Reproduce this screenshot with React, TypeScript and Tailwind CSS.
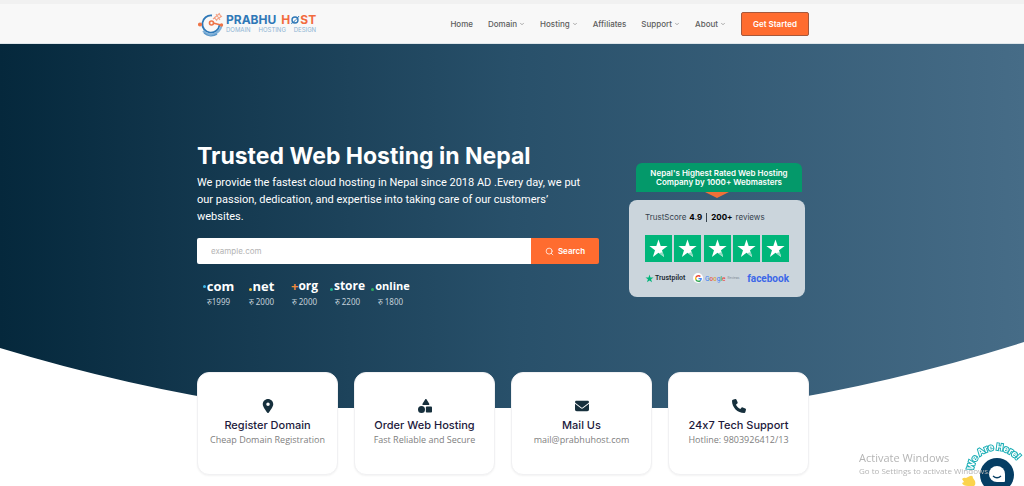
import type { ReactNode } from 'react'
import { FaEnvelope, FaLocationDot, FaPhone, FaShapes } from 'react-icons/fa6'
import { FiChevronDown, FiSearch } from 'react-icons/fi'

interface NavItem {
    label: string;
    hasMenu?: boolean;
}

interface Tld {
    name: string;
    mark: ReactNode;
    nameClass: string;
    price: string;
}

interface Feature {
    icon: ReactNode;
    title: string;
    text: string;
}

const navItems: NavItem[] = [
    { label: 'Home' },
    { label: 'Domain', hasMenu: true },
    { label: 'Hosting', hasMenu: true },
    { label: 'Affiliates' },
    { label: 'Support', hasMenu: true },
    { label: 'About', hasMenu: true },
]

const Dot = ({ className }: { className: string }) => (
    <span className={`mr-px size-[3px] rounded-full ${className}`} />
)

const tlds: Tld[] = [
    { name: 'com', mark: <Dot className="bg-[#3fb8e8]" />, nameClass: 'text-[13px]', price: 'रु1999' },
    { name: 'net', mark: <Dot className="mb-[3px] self-end bg-[#f5c842]" />, nameClass: 'text-[13px]', price: 'रु 2000' },
    { name: 'org', mark: <span className="text-[13px] text-[#f08a3c]">+</span>, nameClass: 'text-[12px]', price: 'रु 2000' },
    { name: 'store', mark: <Dot className="mb-[3px] self-end bg-[#1fb58f]" />, nameClass: 'text-[12px]', price: 'रु 2200' },
    { name: 'online', mark: <Dot className="mb-[3px] self-end bg-[#2fae5f]" />, nameClass: 'text-[11px]', price: 'रु 1800' },
]

const features: Feature[] = [
    { icon: <FaLocationDot />, title: 'Register Domain', text: 'Cheap Domain Registration' },
    { icon: <FaShapes />, title: 'Order Web Hosting', text: 'Fast Reliable and Secure' },
    { icon: <FaEnvelope />, title: 'Mail Us', text: 'mail@prabhuhost.com' },
    { icon: <FaPhone />, title: '24x7 Tech Support', text: 'Hotline: 9803926412/13' },
]

const Container = ({ className = '', children }: { className?: string; children: ReactNode }) => (
    <div className="px-4 lg:pl-0 lg:pr-[18px]">
        <div className={`mx-auto max-w-[612px] ${className}`}>{children}</div>
    </div>
)

const Logo = () => (
    <a href="#" className="flex items-center gap-0.5" aria-label="Prabhu Host">
        <svg viewBox="0 0 27 26" className="h-[26px] w-[27px]" fill="none">
            <path d="M15 4.500a8.600 8.600 0 1 0 7.500 9.500" stroke="#2f78b7" strokeWidth="1.800" />
            <path d="M6 20a11 11 0 0 0 18.500-5" stroke="#7fb0d8" strokeWidth="2" />
            <path d="M7 22a11 11 0 0 0 13 1" stroke="#5b97c9" strokeWidth="1.500" />
            <path d="M1 13.500h4M16 12l8 2" stroke="#ee7447" strokeWidth="1.600" />
            <circle cx="3" cy="13.500" r="2" fill="#ee7447" />
            <circle cx="14.500" cy="12" r="2" stroke="#ee7447" strokeWidth="1.600" />
            <circle cx="24.500" cy="14" r="1.700" fill="#ee7447" />
            <path d="M17 6l3 4M19 3l4 6M22 2l2 4M16 8l6-5M19 9l6-4" stroke="#f3a387" strokeWidth="1.100" />
        </svg>
        <div>
            <div className="flex gap-[5px] text-[12px] leading-[12px] font-bold">
                <span className="text-[#2f78b7]">PRABHU</span>
                <span className="flex items-center text-[#f26b3f]">
                    H
                    <svg viewBox="0 0 10 10" className="size-[10px]" fill="none">
                        <circle cx="5" cy="5" r="3" stroke="#2f78b7" strokeWidth="1.400" />
                        <path d="M1 8.500C3 8 7 4 9 1" stroke="#2f78b7" />
                    </svg>
                    ST
                </span>
            </div>
            <div className="flex justify-between text-[6px] leading-[7px] text-[#8db4d4]">
                <span>DOMAIN</span>
                <span>HOSTING</span>
                <span>DESIGN</span>
            </div>
        </div>
    </a>
)

const Header = () => (
    <header className="border-t-4 border-b border-t-[#f1f1f1] border-b-[#dfe6ea] bg-[#f8f8f8]">
        <Container className="flex h-[39px] items-center justify-between">
            <Logo />
            <nav className="flex items-center gap-[15px] text-[8px] font-medium text-[#5d5d5d]">
                {navItems.map((item) => (
                    <a key={item.label} href="#" className="flex items-center gap-0.5">
                        {item.label}
                        {item.hasMenu && <FiChevronDown className="size-[6px]" />}
                    </a>
                ))}
                <button className="h-6 w-[68px] rounded-xs border border-[#a5583c] bg-[#ff6c2f] font-semibold text-white">
                    Get Started
                </button>
            </nav>
        </Container>
    </header>
)

const DomainSearch = () => (
    <form className="mt-[13px] flex h-[26px] overflow-hidden rounded-xs" onSubmit={(e) => e.preventDefault()}>
        <input
            type="text"
            aria-label="Domain name"
            placeholder="example.com"
            className="min-w-0 flex-1 bg-white px-[14px] text-[8px] text-gray-700 outline-none placeholder:text-[#b4b4b4]"
        />
        <button className="flex w-[68px] items-center justify-center gap-1 bg-[#ff6c2f] text-[8px] font-semibold text-white">
            <FiSearch className="size-[9px]" />
            Search
        </button>
    </form>
)

const TldList = () => (
    <ul className="mt-[14px] flex">
        {tlds.map((tld) => (
            <li key={tld.name} className="w-[43px] text-center">
                <div className="flex h-4 items-center justify-center font-['Open_Sans',sans-serif] leading-4 font-bold text-white">
                    {tld.mark}
                    <span className={tld.nameClass}>{tld.name}</span>
                </div>
                <div className="mt-0.5 font-['Noto_Sans',sans-serif] text-[8px] leading-[12px] whitespace-nowrap text-[#c3d0d9]">
                    {tld.price}
                </div>
            </li>
        ))}
    </ul>
)

const Star = ({ className }: { className?: string }) => (
    <svg viewBox="0 0 24 24" className={className} fill="currentColor">
        <path d="M12 1.500l2.600 7.700h8.200l-6.600 4.800 2.500 7.800L12 17l-6.700 4.800L7.800 14 1.200 9.200h8.200z" />
    </svg>
)

const RatingStar = () => (
    <svg viewBox="0 0 27 27" className="size-[27px]">
        <rect width="27" height="27" fill="#00b67a" />
        <path d="M13.500 4.500l2.200 6.600h6.900L17 15.200l2.100 6.700-5.600-4.100-5.600 4.100L10 15.200l-5.600-4.100h6.900z" fill="#fff" />
        <path d="M14 18.300l3.900-1.300 1.200 4.900z" fill="#8fdcc2" />
    </svg>
)

const GoogleMark = () => (
    <svg viewBox="0 0 48 48" className="size-[7px]">
        <path fill="#ea4335" d="M24 9.500c3.500 0 6.700 1.200 9.200 3.600l6.900-6.900C35.900 2.400 30.500 0 24 0 14.600 0 6.500 5.400 2.600 13.200l8 6.200C12.400 13.700 17.700 9.500 24 9.500z" />
        <path fill="#4285f4" d="M47 24.600c0-1.600-.2-3.100-.4-4.600H24v9h12.900c-.6 3-2.300 5.500-4.800 7.200l7.700 6C44.400 38 47 31.800 47 24.600z" />
        <path fill="#fbbc05" d="M10.500 28.600a14.500 14.500 0 0 1 0-9.200l-8-6.200a24 24 0 0 0 0 21.600z" />
        <path fill="#34a853" d="M24 48c6.500 0 11.900-2.100 15.900-5.800l-7.700-6c-2.200 1.500-4.900 2.300-8.200 2.300-6.300 0-11.600-4.200-13.500-9.900l-8 6.200C6.500 42.600 14.600 48 24 48z" />
    </svg>
)

const TrustBadge = () => (
    <aside className="mt-[23px] mr-1 w-44 shrink-0">
        <div className="mr-[3px] ml-[7px] flex h-[29px] flex-col items-center justify-center rounded-t-md bg-[#04996a] text-center text-[8px] leading-[9px] font-semibold text-white">
            <span>Nepal's Highest Rated Web Hosting</span>
            <span>Company by 1000+ Webmasters</span>
        </div>
        <svg viewBox="0 0 24 6" className="mx-auto mb-0.5 h-[6px] w-6">
            <path d="M0 0h24l-12 6z" fill="#ef7038" />
        </svg>
        <div className="rounded-lg bg-[#cbd5dc] px-4 pt-[10px] pb-3">
            <p className="flex items-center text-[8px] leading-[14px] text-[#35424c]">
                TrustScore <b className="ml-[3px] text-black">4.9</b>
                <span className="mx-1 h-[9px] w-px bg-[#35424c]" />
                <b className="mr-[3px] text-black">200+</b> reviews
            </p>
            <div className="mt-[11px] flex justify-between">
                {[1, 2, 3, 4, 5].map((n) => (
                    <RatingStar key={n} />
                ))}
            </div>
            <div className="mt-[9px] flex h-[14px] items-center justify-between">
                <span className="flex items-center gap-px font-['Roboto',sans-serif] text-[7px] font-semibold text-[#1c2a33]">
                    <Star className="size-[9px] text-[#00b67a]" />
                    Trustpilot
                </span>
                <span className="flex items-center gap-0.5 text-[6px] font-medium">
                    <span className="flex size-[10px] items-center justify-center rounded-full bg-white">
                        <GoogleMark />
                    </span>
                    <span>
                        <span className="text-[#4285f4]">G</span>
                        <span className="text-[#ea4335]">o</span>
                        <span className="text-[#d99a10]">o</span>
                        <span className="text-[#4285f4]">g</span>
                        <span className="text-[#34a853]">l</span>
                        <span className="text-[#ea4335]">e</span>
                    </span>
                    <span className="text-[3px] text-[#8a949c]">Reviews</span>
                </span>
                <span className="font-['Roboto',sans-serif] text-[10px] font-bold text-[#3b67e8]">facebook</span>
            </div>
        </div>
    </aside>
)

const Hero = () => (
    <section className="bg-linear-to-r from-[#05283c] via-[#28506a] to-[#466c87]">
        <Container className="flex justify-between gap-[30px] pt-24 pb-8">
            <div className="max-w-[402px] flex-1">
                <h1 className="text-[23px] leading-8 font-bold text-white">Trusted Web Hosting in Nepal</h1>
                <p className="mt-0.5 font-['Roboto',sans-serif] text-[11px] leading-[17px] text-white">
                    We provide the fastest cloud hosting in Nepal since 2018 AD .Every day, we put
                    <br className="hidden sm:block" /> our passion, dedication, and expertise into taking care
                    of our customers’
                    <br className="hidden sm:block" /> websites.
                </p>
                <DomainSearch />
                <TldList />
            </div>
            <TrustBadge />
        </Container>
        <svg viewBox="0 0 1024 68" preserveAspectRatio="none" className="block h-[68px] w-full">
            <path d="M0 8Q512 163 1024 2V170H0z" fill="#fff" />
        </svg>
    </section>
)

const Features = () => (
    <section className="relative -mt-9 pb-3">
        <Container className="grid grid-cols-2 gap-4 sm:grid-cols-4">
            {features.map((feature) => (
                <article
                    key={feature.title}
                    className="flex flex-col items-center rounded-xl border border-[#f1f1f3] bg-white pt-[26px] pb-[28px] text-center shadow-xs"
                >
                    <span className="text-[14px] text-[#17303d]">{feature.icon}</span>
                    <h2 className="mt-1 text-[11px] leading-4 font-medium text-[#1d1a3c] [font-feature-settings:'calt'_0]">
                        {feature.title}
                    </h2>
                    <p className="font-['Open_Sans',sans-serif] text-[9px] leading-[13px] whitespace-nowrap text-[#808080]">
                        {feature.text}
                    </p>
                </article>
            ))}
        </Container>
    </section>
)

const ChatButton = () => (
    <button className="fixed right-0 bottom-0" aria-label="Open chat">
        <svg viewBox="0 0 64 50" className="h-[50px] w-16">
            <path id="greeting" d="M13 35C16 12 44 6 59 27" fill="none" />
            <text
                className="font-['Inter',sans-serif] text-[9px] font-bold"
                fill="#fff"
                stroke="#18adb5"
                strokeWidth="2"
                paintOrder="stroke"
            >
                <textPath href="#greeting">We Are Here!</textPath>
            </text>
            <path d="M2 43q2-2 4-1l4-2q3-1 3 2l2 3q1 4-1 5H8q-5 0-6-3l2-1z" fill="#fbd34d" />
            <circle cx="37" cy="39" r="17" fill="#053d63" />
            <path d="M37 30a8 8 0 0 1 8 8v7q0 1-1 1h-7a8 8 0 0 1 0-16z" fill="#fff" />
            <path d="M33 40q4 3.500 8 0" stroke="#053d63" strokeWidth="1.300" fill="none" />
        </svg>
    </button>
)

const App = () => (
    <main className="bg-white font-['Inter',sans-serif]">
        <Header />
        <Hero />
        <Features />
        <ChatButton />
        <div className="pointer-events-none fixed right-[35px] bottom-[10px] w-[130px] font-['Open_Sans',sans-serif] whitespace-nowrap text-[#b5b5b5]">
            <p className="text-[11px] leading-[14px]">Activate Windows</p>
            <p className="text-[8px] leading-[11px]">Go to Settings to activate Windows.</p>
        </div>
    </main>
)

export default App
